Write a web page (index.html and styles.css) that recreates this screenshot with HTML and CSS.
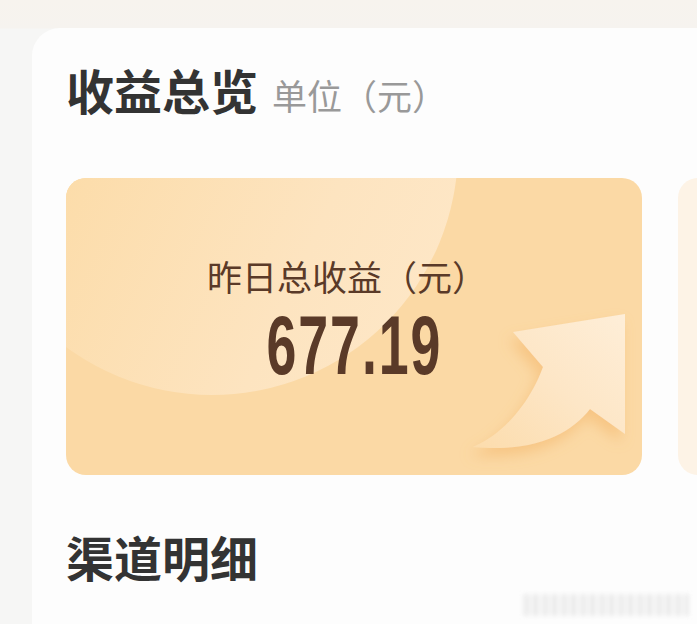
FILE: index.html
```html
<!DOCTYPE html>
<html lang="zh-CN">
<head>
<meta charset="UTF-8">
<meta name="viewport" content="width=device-width, initial-scale=1.0">
<title>收益总览</title>
<link rel="stylesheet" href="styles.css">
</head>
<body>
<div class="page">
  <div class="panel">
    <h1 class="titulo">收益总览<span class="unidad">单位（元）</span></h1>

    <div class="tarjetas">
      <div class="tarjeta principal">
        <div class="circulo"></div>
        <svg class="flecha" viewBox="0 0 576 296" width="576" height="296">
          <defs>
            <linearGradient id="gFlecha" x1="0" y1="1" x2="1" y2="0">
              <stop offset="0" stop-color="#fcdcac"/>
              <stop offset="0.5" stop-color="#fde6c6"/>
              <stop offset="1" stop-color="#feeed8"/>
            </linearGradient>
            <filter id="sombra" x="-30%" y="-30%" width="160%" height="160%">
              <feDropShadow dx="-4" dy="8" stdDeviation="7" flood-color="#f2ad5c" flood-opacity="0.45"/>
            </filter>
          </defs>
          <path d="M447,154 L559,136 L559,256 L524,231 C505,255 470,275 407,269 C440,255 465,222 477,189 Z" fill="url(#gFlecha)" filter="url(#sombra)"/>
        </svg>
        <div class="texto">
          <p class="etiqueta">昨日总收益（元）</p>
          <p class="monto"><span>677.19</span></p>
        </div>
      </div>
      <div class="tarjeta segunda"></div>
    </div>

    <h2 class="titulo canal">渠道明细</h2>
  </div>
</div>
<div class="marca"></div>
</body>
</html>
```

FILE: styles.css
```css
body {
  margin: 0;
  background: #f6f6f5;
  font-family: "Noto Sans CJK SC", "Noto Sans", sans-serif;
  overflow: hidden;
}

.page {
  padding-top: 28px;
  padding-left: 32px;
  height: 624px;
  box-sizing: border-box;
  background: linear-gradient(to bottom, #f7f3ee 0px, #f6f3ef 28px, #f6f6f5 29px);
}

.panel {
  background: #fdfdfd;
  border-radius: 28px 0 0 0;
  height: 100%;
  padding: 37px 0 0 34px;
  box-sizing: border-box;
  overflow: hidden;
}

.titulo {
  margin: 0;
  font-size: 48px;
  line-height: 48px;
  font-weight: 700;
  color: #333333;
  white-space: nowrap;
}

.unidad {
  margin-left: 14px;
  font-size: 35px;
  font-weight: 400;
  color: #999999;
}

.tarjetas {
  display: flex;
  gap: 36px;
  margin-top: 59px;
  width: 1200px;
}

.tarjeta {
  flex-shrink: 0;
  width: 576px;
  height: 297px;
  border-radius: 20px;
}

.principal {
  position: relative;
  overflow: hidden;
  background: #fbd9a5;
}

.segunda {
  background: #fdf3e6;
}

.circulo {
  position: absolute;
  left: -100px;
  top: -275px;
  width: 492px;
  height: 492px;
  border-radius: 50%;
  background: linear-gradient(115deg, #fcdca9 30%, #fde4c0 70%, #fee8c9);
}

.flecha {
  position: absolute;
  left: 0;
  top: 0;
}

.texto {
  position: relative;
  padding-top: 80px;
  text-align: center;
  color: #5a3a28;
}

.etiqueta {
  margin: 0 0 0 -14px;
  font-size: 35px;
  line-height: 35px;
}

.monto {
  margin: 10px 0 0;
  font-family: "Liberation Sans Narrow", "Liberation Sans", sans-serif;
  font-size: 84px;
  line-height: 84px;
  font-weight: 700;
  letter-spacing: 3px;
}

.monto span {
  display: inline-block;
  transform: scaleX(0.64);
}

.canal {
  margin-top: 57px;
}

.marca {
  position: absolute;
  right: 8px;
  bottom: 8px;
  width: 166px;
  height: 22px;
  background: repeating-linear-gradient(to right, #e4e4e4 0 7px, #f8f8f8 7px 10px, #dedede 10px 15px, #f6f6f6 15px 19px);
  filter: blur(2px);
  opacity: 0.6;
}
```
